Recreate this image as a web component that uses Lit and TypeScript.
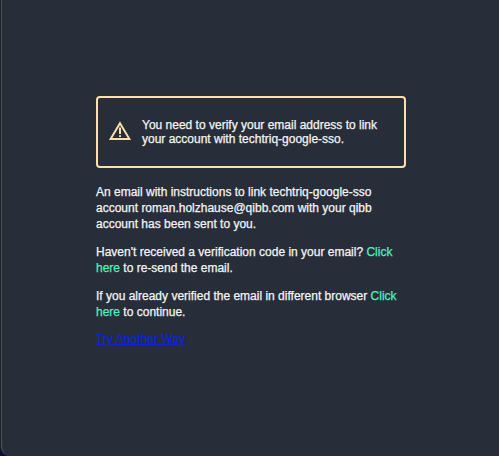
import { css, html, LitElement } from "lit";
import { customElement, property } from "lit/decorators.js";

@customElement("alert-box")
class AlertBox extends LitElement {
	static styles = css`
      :host {
        align-items: center;
        border: 2px solid #fbe0ab;
        border-radius: 4px;
        box-sizing: border-box;
        display: flex;
        gap: 9px;
        height: 72px;
        padding-inline: 11px;
      }

      .icon {
        display: block;
        flex: none;
        height: 20px;
        margin-block-end: 2px;
        width: 24px;
      }

      .message {
        line-height: 14px;
      }
    `;

	render() {
		return html`
      <svg class="icon" viewBox="0 0 24 20" fill="none" stroke="#fbe0ab" aria-hidden="true">
        <path d="M11 2.2 L20.4 18 H1.6 Z" stroke-width="1.9" />
        <path d="M11 6.6 V13 M11 14.2 V16" stroke-width="2" />
      </svg>
      <div class="message"><slot></slot></div>
    `;
	}
}

@customElement("app-root")
class AppRoot extends LitElement {
	static styles = css`
      :host {
        background-color: #090d3c;
        box-sizing: border-box;
        display: block;
        height: 100vh;
        overflow: hidden;
      }

      .window {
        background-color: #272e39;
        border-bottom-left-radius: 9px;
        border-inline-start: 1px solid #50555d;
        box-shadow: -1px 0 0 #1b1f26;
        box-sizing: border-box;
        color: #f4f4f4;
        font-family: "Liberation Sans", Arial, sans-serif;
        font-size: 12px;
        height: 100%;
        line-height: 16px;
        margin-inline-start: 1px;
        padding: 96px 93px 0 94px;
        -webkit-text-stroke: 0.25px currentColor;
      }

      .flow > * + * {
        margin-block: 12px 0;
      }

      .flow > alert-box + * {
        margin-block-start: 16px;
      }

      p {
        margin: 0;
      }

      .link {
        color: #4df0be;
        text-decoration: none;
      }

      .other {
        color: #0b25dc;
        display: block;
        letter-spacing: 0.05px;
        margin-block-start: 11px;
      }
    `;

	@property() provider = "techtriq-google-sso";

	@property() account = "roman.holzhause@qibb.com";

	render() {
		return html`<main class="window flow">
      <alert-box>You need to verify your email address to link<br />your account with ${this.provider}.</alert-box>
      <p>An email with instructions to link ${this.provider}<br />account ${this.account} with your qibb<br />account has been sent to you.</p>
      <p>Haven't received a verification code in your email? <a class="link" href="#">Click<br />here</a> to re-send the email.</p>
      <p>If you already verified the email in different browser <a class="link" href="#">Click<br />here</a> to continue.</p>
      <a class="other" href="#">Try Another Way</a>
    </main>`;
	}
}
